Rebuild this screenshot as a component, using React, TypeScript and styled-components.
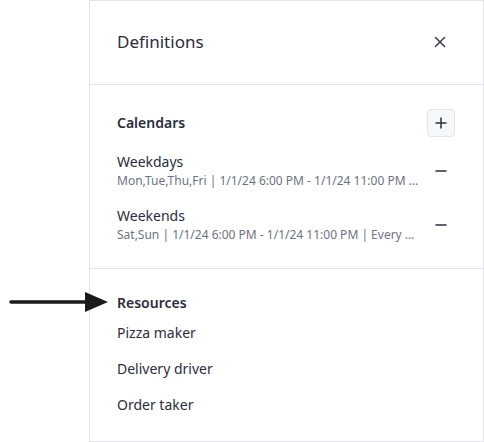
import React from "react";
import styled, { createGlobalStyle } from "styled-components";

const Global = createGlobalStyle`
  html, body { margin: 0; padding: 0; background: #ffffff; }
  body { font-family: "Noto Sans", "Liberation Sans", sans-serif; }
  * { box-sizing: border-box; }
`;

const Page = styled.div`
  position: relative;
  width: 484px;
  height: 442px;
  display: flex;
  padding-left: 89px;
`;

const Panel = styled.aside`
  width: 395px;
  height: 442px;
  border: 1px solid #e3e5ea;
  display: flex;
  flex-direction: column;
  color: #2b2d3a;
`;

const Header = styled.header`
  height: 84px;
  border-bottom: 1px solid #e3e5ea;
  display: flex;
  align-items: center;
  justify-content: space-between;
  padding: 0 29px 2px 27px;
`;

const Title = styled.h1`
  margin: 0;
  font-size: 17px;
  font-weight: 400;
  line-height: 24px;
  color: #2b2d3a;
`;

const IconButton = styled.button<{ $boxed?: boolean }>`
  width: 28px;
  height: 28px;
  padding: 0;
  display: flex;
  align-items: center;
  justify-content: center;
  border-radius: 4px;
  border: 1px solid ${(p) => (p.$boxed ? "#e1e5eb" : "transparent")};
  background: ${(p) => (p.$boxed ? "#f5f8fb" : "transparent")};
  color: #2b2d3a;
  cursor: pointer;
`;

const Section = styled.section<{ $divider?: boolean; $pad: string }>`
  padding: ${(p) => p.$pad};
  border-bottom: ${(p) => (p.$divider ? "1px solid #e3e5ea" : "none")};
  display: flex;
  flex-direction: column;
`;

const SectionHead = styled.div`
  height: 28px;
  display: flex;
  align-items: center;
  justify-content: space-between;
`;

const SectionTitle = styled.h2`
  margin: 0;
  font-size: 14px;
  font-weight: 600;
  line-height: 20px;
  color: #2b2d3a;
`;

const CalendarList = styled.ul`
  list-style: none;
  margin: 15px 0 0;
  padding: 0;
  display: flex;
  flex-direction: column;
  gap: 16px;
`;

const CalendarRow = styled.li`
  display: flex;
  align-items: center;
  gap: 6px;
`;

const CalendarText = styled.div`
  flex: 1;
  min-width: 0;
  display: flex;
  flex-direction: column;
`;

const ItemName = styled.span`
  font-size: 14px;
  line-height: 20px;
  color: #2b2d3a;
`;

const ItemMeta = styled.span`
  font-size: 12px;
  line-height: 18px;
  color: #6e7280;
  white-space: nowrap;
  overflow: hidden;
  text-overflow: ellipsis;
`;

const ResourceList = styled.ul`
  list-style: none;
  margin: 2px 0 0;
  padding: 0;
  display: flex;
  flex-direction: column;
`;

const ResourceItem = styled.li`
  font-size: 14px;
  line-height: 20px;
  padding: 8px 0;
  color: #2b2d3a;
`;

const Pointer = styled.svg`
  position: absolute;
  left: 8px;
  top: 290px;
`;

const CloseIcon = () => (
  <svg width="12" height="12" viewBox="0 0 12 12" fill="none">
    <path d="M1.5 1.5L10.5 10.5M10.5 1.5L1.5 10.5" stroke="#3a3c4c" strokeWidth="1.5" strokeLinecap="round" />
  </svg>
);

const PlusIcon = () => (
  <svg width="12" height="12" viewBox="0 0 12 12" fill="none">
    <path d="M6 0.5V11.5M0.5 6H11.5" stroke="#2b2d3a" strokeWidth="1.5" />
  </svg>
);

const MinusIcon = () => (
  <svg width="12" height="12" viewBox="0 0 12 12" fill="none">
    <path d="M0.5 6H11.5" stroke="#5d6270" strokeWidth="2" />
  </svg>
);

const calendars = [
  { name: "Weekdays", meta: "Mon,Tue,Thu,Fri | 1/1/24 6:00 PM - 1/1/24 11:00 PM | Every week" },
  { name: "Weekends", meta: "Sat,Sun | 1/1/24 6:00 PM - 1/1/24 11:00 PM | Every week" },
];

const resources = ["Pizza maker", "Delivery driver", "Order taker"];

export default function App() {
  return (
    <>
      <Global />
      <Page>
        <Panel>
          <Header>
            <Title>Definitions</Title>
            <IconButton aria-label="Close">
              <CloseIcon />
            </IconButton>
          </Header>
          <Section $divider $pad="24px 28px 24px 27px">
            <SectionHead>
              <SectionTitle>Calendars</SectionTitle>
              <IconButton $boxed aria-label="Add calendar">
                <PlusIcon />
              </IconButton>
            </SectionHead>
            <CalendarList>
              {calendars.map((c) => (
                <CalendarRow key={c.name}>
                  <CalendarText>
                    <ItemName>{c.name}</ItemName>
                    <ItemMeta>{c.meta}</ItemMeta>
                  </CalendarText>
                  <IconButton aria-label={`Remove ${c.name}`}>
                    <MinusIcon />
                  </IconButton>
                </CalendarRow>
              ))}
            </CalendarList>
          </Section>
          <Section $pad="24px 28px 0 27px">
            <SectionTitle>Resources</SectionTitle>
            <ResourceList>
              {resources.map((r) => (
                <ResourceItem key={r}>{r}</ResourceItem>
              ))}
            </ResourceList>
          </Section>
        </Panel>
        <Pointer width="102" height="24" viewBox="0 0 102 24">
          <path d="M3 12H80" stroke="#1a1a1a" strokeWidth="3.5" strokeLinecap="round" />
          <path d="M77 2L100 12L77 22Z" fill="#1a1a1a" />
        </Pointer>
      </Page>
    </>
  );
}
